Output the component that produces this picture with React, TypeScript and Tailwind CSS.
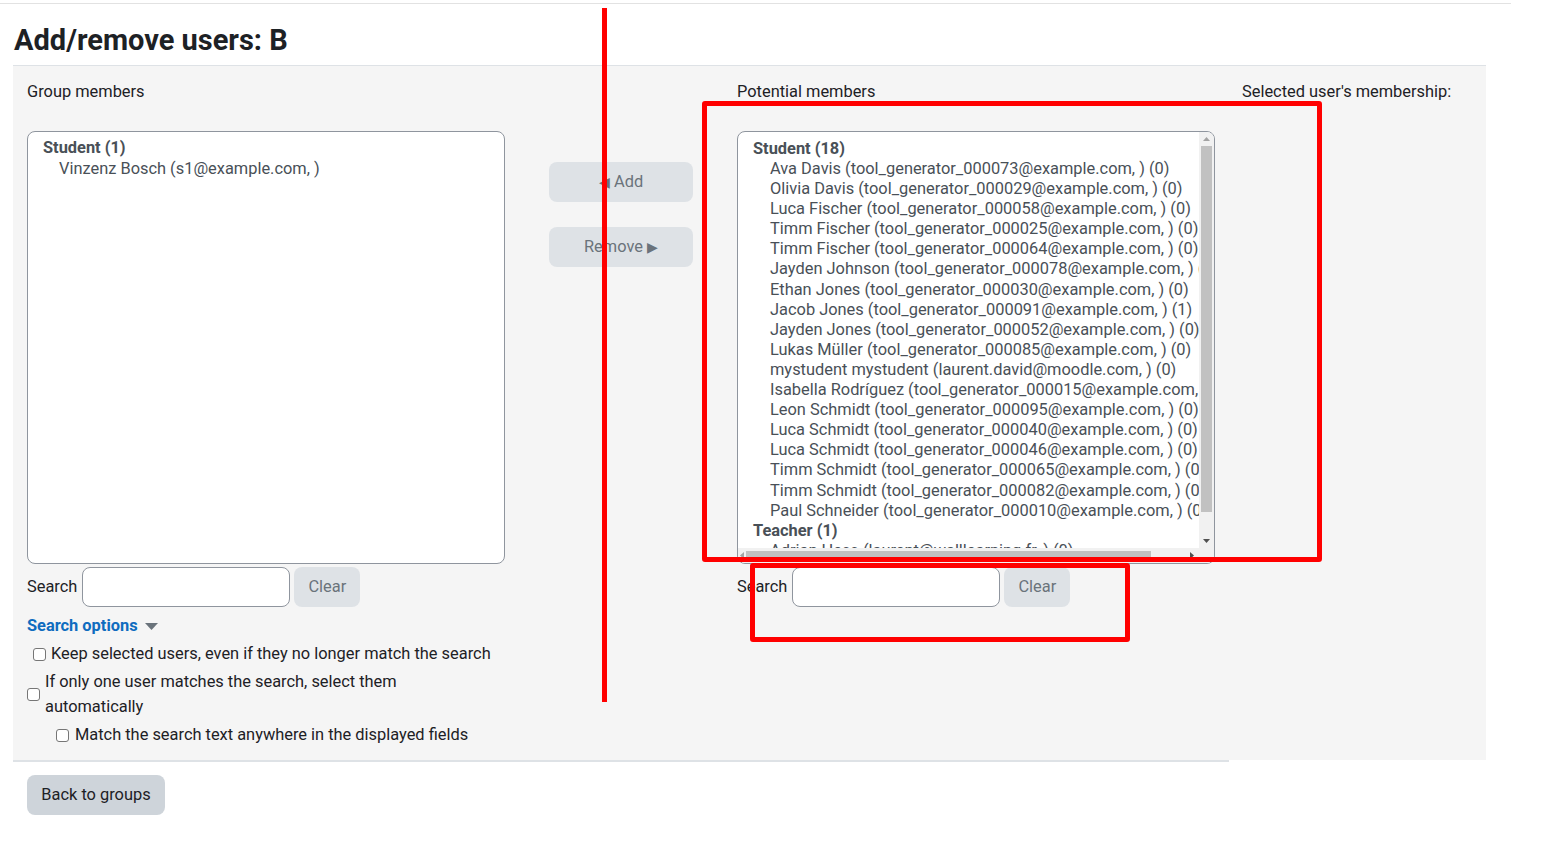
import React from "react";

const potential = [
  "Ava Davis (tool_generator_000073@example.com, ) (0)",
  "Olivia Davis (tool_generator_000029@example.com, ) (0)",
  "Luca Fischer (tool_generator_000058@example.com, ) (0)",
  "Timm Fischer (tool_generator_000025@example.com, ) (0)",
  "Timm Fischer (tool_generator_000064@example.com, ) (0)",
  "Jayden Johnson (tool_generator_000078@example.com, ) (0)",
  "Ethan Jones (tool_generator_000030@example.com, ) (0)",
  "Jacob Jones (tool_generator_000091@example.com, ) (1)",
  "Jayden Jones (tool_generator_000052@example.com, ) (0)",
  "Lukas Müller (tool_generator_000085@example.com, ) (0)",
  "mystudent mystudent (laurent.david@moodle.com, ) (0)",
  "Isabella Rodríguez (tool_generator_000015@example.com, ) (0)",
  "Leon Schmidt (tool_generator_000095@example.com, ) (0)",
  "Luca Schmidt (tool_generator_000040@example.com, ) (0)",
  "Luca Schmidt (tool_generator_000046@example.com, ) (0)",
  "Timm Schmidt (tool_generator_000065@example.com, ) (0)",
  "Timm Schmidt (tool_generator_000082@example.com, ) (0)",
  "Paul Schneider (tool_generator_000010@example.com, ) (0)",
];

function SearchRow() {
  return (
    <div className="mt-[3px] flex h-[40px] items-center">
      <label className="mr-[5px] text-[#1d2125]">Search</label>
      <input
        type="text"
        className="h-[40px] w-[208px] rounded-[8px] border border-[#8f959e] bg-white px-3 outline-none"
      />
      <button
        type="button"
        className="ml-[4px] h-[40px] w-[66px] rounded-[8px] bg-[#dee2e6] text-[#6a737b]"
      >
        Clear
      </button>
    </div>
  );
}

function Checkbox() {
  return (
    <span className="inline-block h-[13px] w-[13px] shrink-0 rounded-[3px] border border-[#767676] bg-white" />
  );
}

export default function App() {
  return (
    <div className="relative min-h-screen bg-white font-['Roboto',sans-serif] text-[16.4px] leading-[22px] text-[#1d2125]">
      <div className="h-[4px] w-[1511px] border-b border-[#e2e2e2]" />
      <h2 className="ml-[14px] mt-[19px] mb-[8px] text-[29px] font-bold leading-[34px] text-[#1d2125]">
        Add/remove users: B
      </h2>

      <div className="ml-[13px] flex h-[695px] w-[1473px] border-t border-[#dee2e6] bg-[#f5f5f5]">
        {/* group members */}
        <div className="ml-[14px] w-[478px] shrink-0 pt-[15px]">
          <div>Group members</div>
          <div className="mt-[28px] h-[433px] rounded-[8px] border border-[#8f959e] bg-white pt-[6px] text-[#495057]">
            <div className="pl-[15px] font-bold leading-[20px]">Student (1)</div>
            <div className="pl-[31px] leading-[22px]">Vinzenz Bosch (s1@example.com, )</div>
          </div>
          <SearchRow />
          <div className="mt-[8px] flex items-center">
            <span className="font-bold text-[#0f6cbf]">Search options</span>
            <svg width="13" height="7" viewBox="0 0 13 7" className="ml-[7px] mt-[1px]">
              <path d="M0 0 L13 0 L6.5 7 Z" fill="#6a737b" />
            </svg>
          </div>
          <div className="mt-[6px] flex items-center pl-[6px]">
            <Checkbox />
            <span className="ml-[5px] whitespace-nowrap">Keep selected users, even if they no longer match the search</span>
          </div>
          <div className="mt-[4px] flex items-center">
            <Checkbox />
            <span className="ml-[5px] w-[440px] leading-[25px]">
              If only one user matches the search, select them automatically
            </span>
          </div>
          <div className="mt-[5px] flex items-center pl-[29px]">
            <Checkbox />
            <span className="ml-[6px] whitespace-nowrap">Match the search text anywhere in the displayed fields</span>
          </div>
        </div>

        {/* add / remove */}
        <div className="ml-[44px] flex w-[144px] shrink-0 flex-col pt-[96px]">
          <button
            type="button"
            className="h-[40px] rounded-[8px] bg-[#dee2e6] text-[#6a737b]"
          >
            <span className="text-[14px]">◀</span> Add
          </button>
          <button
            type="button"
            className="mt-[25px] h-[40px] rounded-[8px] bg-[#dee2e6] text-[#6a737b]"
          >
            Remove <span className="text-[14px]">▶</span>
          </button>
        </div>

        {/* potential members */}
        <div className="ml-[44px] w-[478px] shrink-0 pt-[15px]">
          <div>Potential members</div>
          <div className="mt-[28px] flex h-[433px] flex-col overflow-hidden rounded-[8px] border border-[#8f959e] bg-white text-[#495057]">
            <div className="flex min-h-0 flex-1">
              <div className="min-w-0 flex-1 overflow-hidden whitespace-nowrap pt-[6px]">
                <div className="pl-[15px] font-bold leading-[21px]">Student (18)</div>
                {potential.map((p, i) => (
                  <div key={i} className="pl-[32px] leading-[20.1px]">
                    {p}
                  </div>
                ))}
                <div className="pl-[15px] font-bold leading-[20.1px]">Teacher (1)</div>
                <div className="pl-[32px] leading-[20.1px]">Adrian Hess (laurent@walllearning.fr, ) (0)</div>
              </div>
              <div className="flex w-[15px] shrink-0 flex-col items-center bg-[#f1f1f1]">
                <svg width="7" height="4" viewBox="0 0 7 4" className="mt-[5px]">
                  <path d="M0 4 L3.5 0 L7 4 Z" fill="#a3a3a3" />
                </svg>
                <div className="mt-[5px] h-[366px] w-[11px] bg-[#c1c1c1]" />
                <div className="flex-1" />
                <svg width="7" height="4" viewBox="0 0 7 4" className="mb-[5px]">
                  <path d="M0 0 L7 0 L3.5 4 Z" fill="#505050" />
                </svg>
              </div>
            </div>
            <div className="flex h-[15px] shrink-0 items-center bg-[#f1f1f1]">
              <svg width="4" height="7" viewBox="0 0 4 7" className="ml-[2px]">
                <path d="M4 0 L0 3.5 L4 7 Z" fill="#a3a3a3" />
              </svg>
              <div className="ml-[2px] h-[9px] w-[405px] bg-[#c1c1c1]" />
              <div className="flex-1" />
              <svg width="4" height="7" viewBox="0 0 4 7" className="mr-[20px]">
                <path d="M0 0 L4 3.5 L0 7 Z" fill="#505050" />
              </svg>
            </div>
          </div>
          <SearchRow />
        </div>

        {/* selected user's membership */}
        <div className="ml-[27px] pt-[15px]">
          <div className="whitespace-nowrap">Selected user's membership:</div>
        </div>
      </div>

      <div className="ml-[13px] h-[2px] w-[1216px] bg-[#dee2e6]" />
      <button
        type="button"
        className="ml-[27px] mt-[13px] h-[40px] w-[138px] rounded-[8px] bg-[#ced4da] text-[#1d2125]"
      >
        Back to groups
      </button>

      {/* red annotations */}
      <div className="absolute left-[602px] top-[8px] h-[694px] w-[5px] bg-[#ff0000]" />
      <div className="absolute left-[702px] top-[101px] h-[461px] w-[620px] rounded-[3px] border-[5px] border-[#ff0000]" />
      <div className="absolute left-[750px] top-[563px] h-[79px] w-[380px] rounded-[3px] border-[5px] border-[#ff0000]" />
    </div>
  );
}
